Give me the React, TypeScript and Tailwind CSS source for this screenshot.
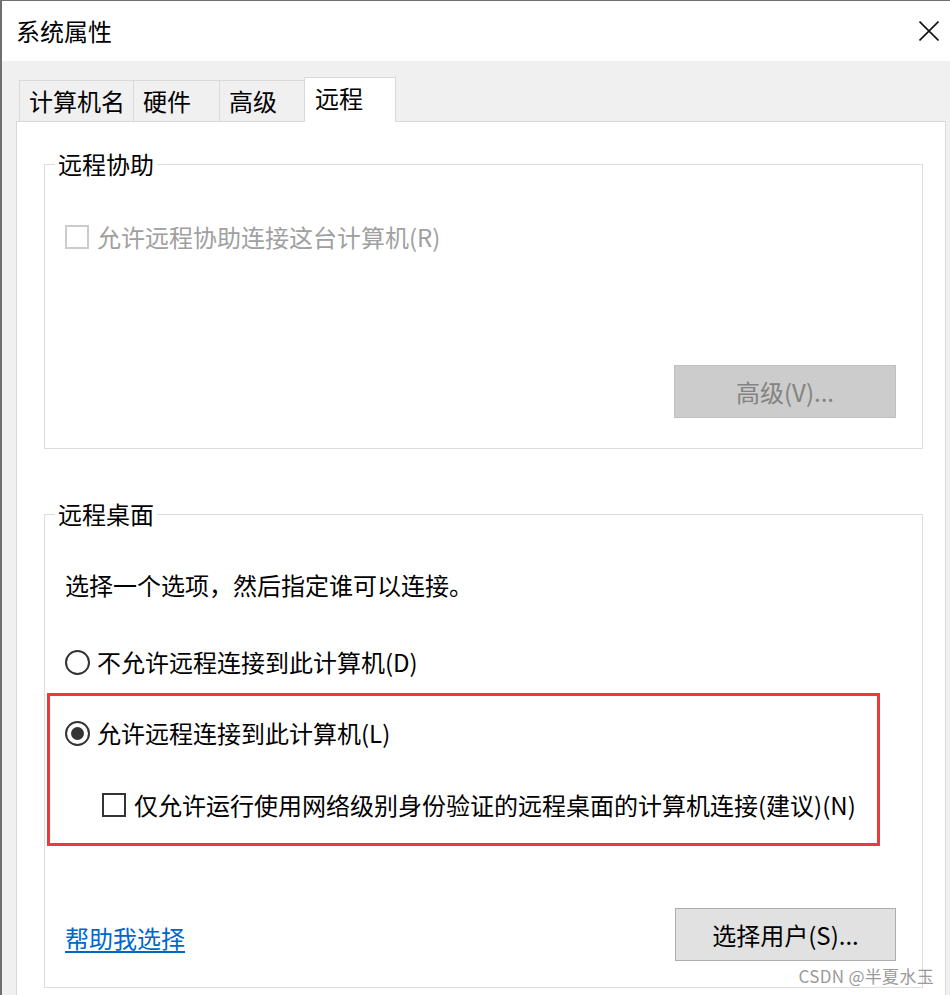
const font = { fontFamily: '"Noto Sans CJK SC", "Noto Sans", sans-serif' };

const Checkbox = ({ disabled }: { disabled?: boolean }) => (
  <span
    className={`inline-block w-[24px] h-[24px] shrink-0 border-2 bg-white ${
      disabled ? 'border-[#cccccc]' : 'border-[#333333]'
    }`}
  />
);

const Radio = ({ checked }: { checked?: boolean }) => (
  <span className="inline-flex w-[25px] h-[25px] shrink-0 items-center justify-center rounded-full border-2 border-[#333333] bg-white">
    {checked && <span className="block w-[13px] h-[13px] rounded-full bg-[#333333]" />}
  </span>
);

const tabs = [
  { label: '计算机名', w: 'w-[115px] border-l' },
  { label: '硬件', w: 'w-[86px]' },
  { label: '高级', w: 'w-[85px]' },
];

export default function App() {
  return (
    <div
      className="w-[950px] h-[995px] overflow-hidden bg-[#f0f0f0] border-l-2 border-t border-[#6f6f6f] text-[24px] leading-[32px] text-black relative"
      style={font}
    >
      {/* title bar */}
      <div className="h-[60px] bg-white flex items-center justify-between pl-[14px] pr-[11px]">
        <span>系统属性</span>
        <svg viewBox="0 0 20 20" className="w-[20px] h-[20px] mt-[-1px]" stroke="#111111" strokeWidth="1.6" fill="none" aria-hidden>
          <path d="M0.5 0.5L19.5 19.5M19.5 0.5L0.5 19.5" />
        </svg>
      </div>

      {/* tabs */}
      <div className="pt-[16px] pl-[17px] flex items-end h-[60px]">
        {tabs.map((t) => (
          <div
            key={t.label}
            className={`${t.w} h-[41px] flex items-center pl-[9px] border-t border-r border-[#d9d9d9] bg-[#f0f0f0]`}
          >
            {t.label}
          </div>
        ))}
        <div className="relative z-10 -ml-px -mb-px w-[92px] h-[45px] flex items-center pl-[10px] pb-[4px] border-t border-l border-r border-[#d9d9d9] bg-white">
          远程
        </div>
      </div>

      {/* panel */}
      <div className="ml-[14px] w-[930px] h-[900px] bg-white border border-[#d9d9d9] pt-[26px]">
        <fieldset className="ml-[27px] w-[879px] border border-[#dcdcdc] pl-[20px] pr-[26px] pb-[30px]">
          <legend className="-ml-[10px] px-[3px]">远程协助</legend>
          <div className="pt-[41px] flex items-center gap-[8px] text-[#a0a0a0]">
            <Checkbox disabled />
            <span>允许远程协助连接这台计算机(R)</span>
          </div>
          <div className="mt-[112px] flex justify-end">
            <div className="w-[222px] h-[53px] flex items-center justify-center bg-[#cccccc] border border-[#bfbfbf] text-[#838383]">
              高级(V)...
            </div>
          </div>
        </fieldset>

        <fieldset className="mt-[49px] ml-[27px] w-[879px] border border-[#dcdcdc] pl-[20px] pr-[26px] pb-[26px]">
          <legend className="-ml-[10px] px-[3px]">远程桌面</legend>
          <div className="pt-[39px]">选择一个选项，然后指定谁可以连接。</div>
          <div className="mt-[45px] flex items-center gap-[7px]">
            <Radio />
            <span>不允许远程连接到此计算机(D)</span>
          </div>

          <div className="mt-[15px] -ml-[18px] w-[833px] border-[3px] border-[#ec3a3a] pt-[21px] pb-[22px] pl-[15px]">
            <div className="flex items-center gap-[7px]">
              <Radio checked />
              <span>允许远程连接到此计算机(L)</span>
            </div>
            <div className="mt-[40px] ml-[37px] flex items-center gap-[8px]">
              <Checkbox />
              <span>仅允许运行使用网络级别身份验证的远程桌面的计算机连接(建议)(N)</span>
            </div>
          </div>

          <div className="mt-[62px] flex items-start justify-between">
            <span className="mt-[14px] text-[#0066cc] underline underline-offset-[3px]">帮助我选择</span>
            <div className="w-[221px] h-[53px] flex items-center justify-center bg-[#e1e1e1] border border-[#adadad]">
              选择用户(S)...
            </div>
          </div>
        </fieldset>
      </div>

      <div className="absolute right-[16px] bottom-[9px] text-[17px] leading-[20px] tracking-[0.3px] text-[#9a9a9a]">
        CSDN @半夏水玉
      </div>
    </div>
  );
}
